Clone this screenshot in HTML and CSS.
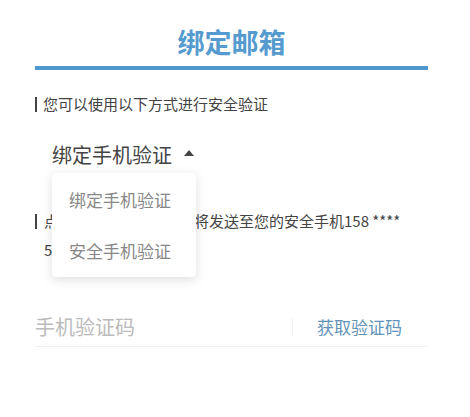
FILE: index.html
```html
<!DOCTYPE html>
<html lang="zh-CN">
<head>
<meta charset="utf-8">
<title>绑定邮箱</title>
<link rel="stylesheet" href="styles.css">
</head>
<body>
<div class="page">
  <h1 class="title">绑定邮箱</h1>
  <div class="rule"></div>
  <p class="label">您可以使用以下方式进行安全验证</p>
  <div class="select-wrap">
    <div class="select">
      <span class="select-text">绑定手机验证</span>
      <span class="caret"></span>
    </div>
    <ul class="menu">
      <li class="menu-item">绑定手机验证</li>
      <li class="menu-item">安全手机验证</li>
    </ul>
  </div>
  <p class="info">点击获取验证码，短信将发送至您的安全手机158 **** 5678</p>
  <div class="code-row">
    <span class="placeholder">手机验证码</span>
    <span class="divider"></span>
    <span class="get-code">获取验证码</span>
  </div>
</div>
</body>
</html>
```

FILE: styles.css
```css
* { box-sizing: border-box; }
html, body { margin: 0; padding: 0; background: #fff; }
body {
  font-family: "Noto Sans CJK SC", "Noto Sans", sans-serif;
  color: #444;
}
.page {
  width: 393px;
  margin-left: 35px;
  padding-top: 24px;
}
.title {
  margin: 0;
  text-align: center;
  font-size: 27px;
  line-height: 36px;
  font-weight: 700;
  color: #559bcf;
}
.rule {
  margin-top: 6px;
  height: 4px;
  background: #4f98cf;
}
.label,
.info {
  margin: 24px 0 0;
  font-size: 15px;
  line-height: 20px;
  padding-left: 8px;
  color: #444;
}
.label::before,
.info::before {
  content: "";
  display: inline-block;
  width: 2px;
  height: 15px;
  margin-left: -8px;
  margin-right: 6px;
  vertical-align: -2px;
  background: #444;
}
.select-wrap {
  position: relative;
  margin-top: 26px;
  padding-left: 17px;
}
.select {
  display: flex;
  align-items: center;
  height: 30px;
}
.select-text {
  font-size: 20px;
  line-height: 30px;
  color: #444;
}
.caret {
  width: 0;
  height: 0;
  margin-left: 12px;
  margin-top: -4px;
  border-left: 5px solid transparent;
  border-right: 5px solid transparent;
  border-bottom: 6px solid #444;
}
.menu {
  position: absolute;
  left: 17px;
  top: 33px;
  width: 144px;
  margin: 0;
  padding: 1px 0;
  list-style: none;
  background: #fff;
  border-radius: 4px;
  box-shadow: 0 3px 12px rgba(0, 0, 0, 0.13);
  z-index: 2;
}
.menu-item {
  padding-left: 17px;
  font-size: 17px;
  line-height: 51px;
  height: 51px;
  color: #888;
}
.info {
  margin-top: 36px;
  line-height: 29px;
  padding-left: 9px;
}
.info::before {
  margin-left: -9px;
  margin-right: 7px;
}
.code-row {
  display: flex;
  align-items: center;
  margin-top: 43px;
  height: 40px;
  border-bottom: 1px solid #f0f0f0;
}
.placeholder {
  flex: 1;
  font-size: 20px;
  color: #bbb;
}
.divider {
  width: 1px;
  height: 18px;
  background: #f2f2f2;
  margin-right: 24px;
}
.get-code {
  font-size: 17px;
  color: #6393b8;
  margin-right: 26px;
}
```
